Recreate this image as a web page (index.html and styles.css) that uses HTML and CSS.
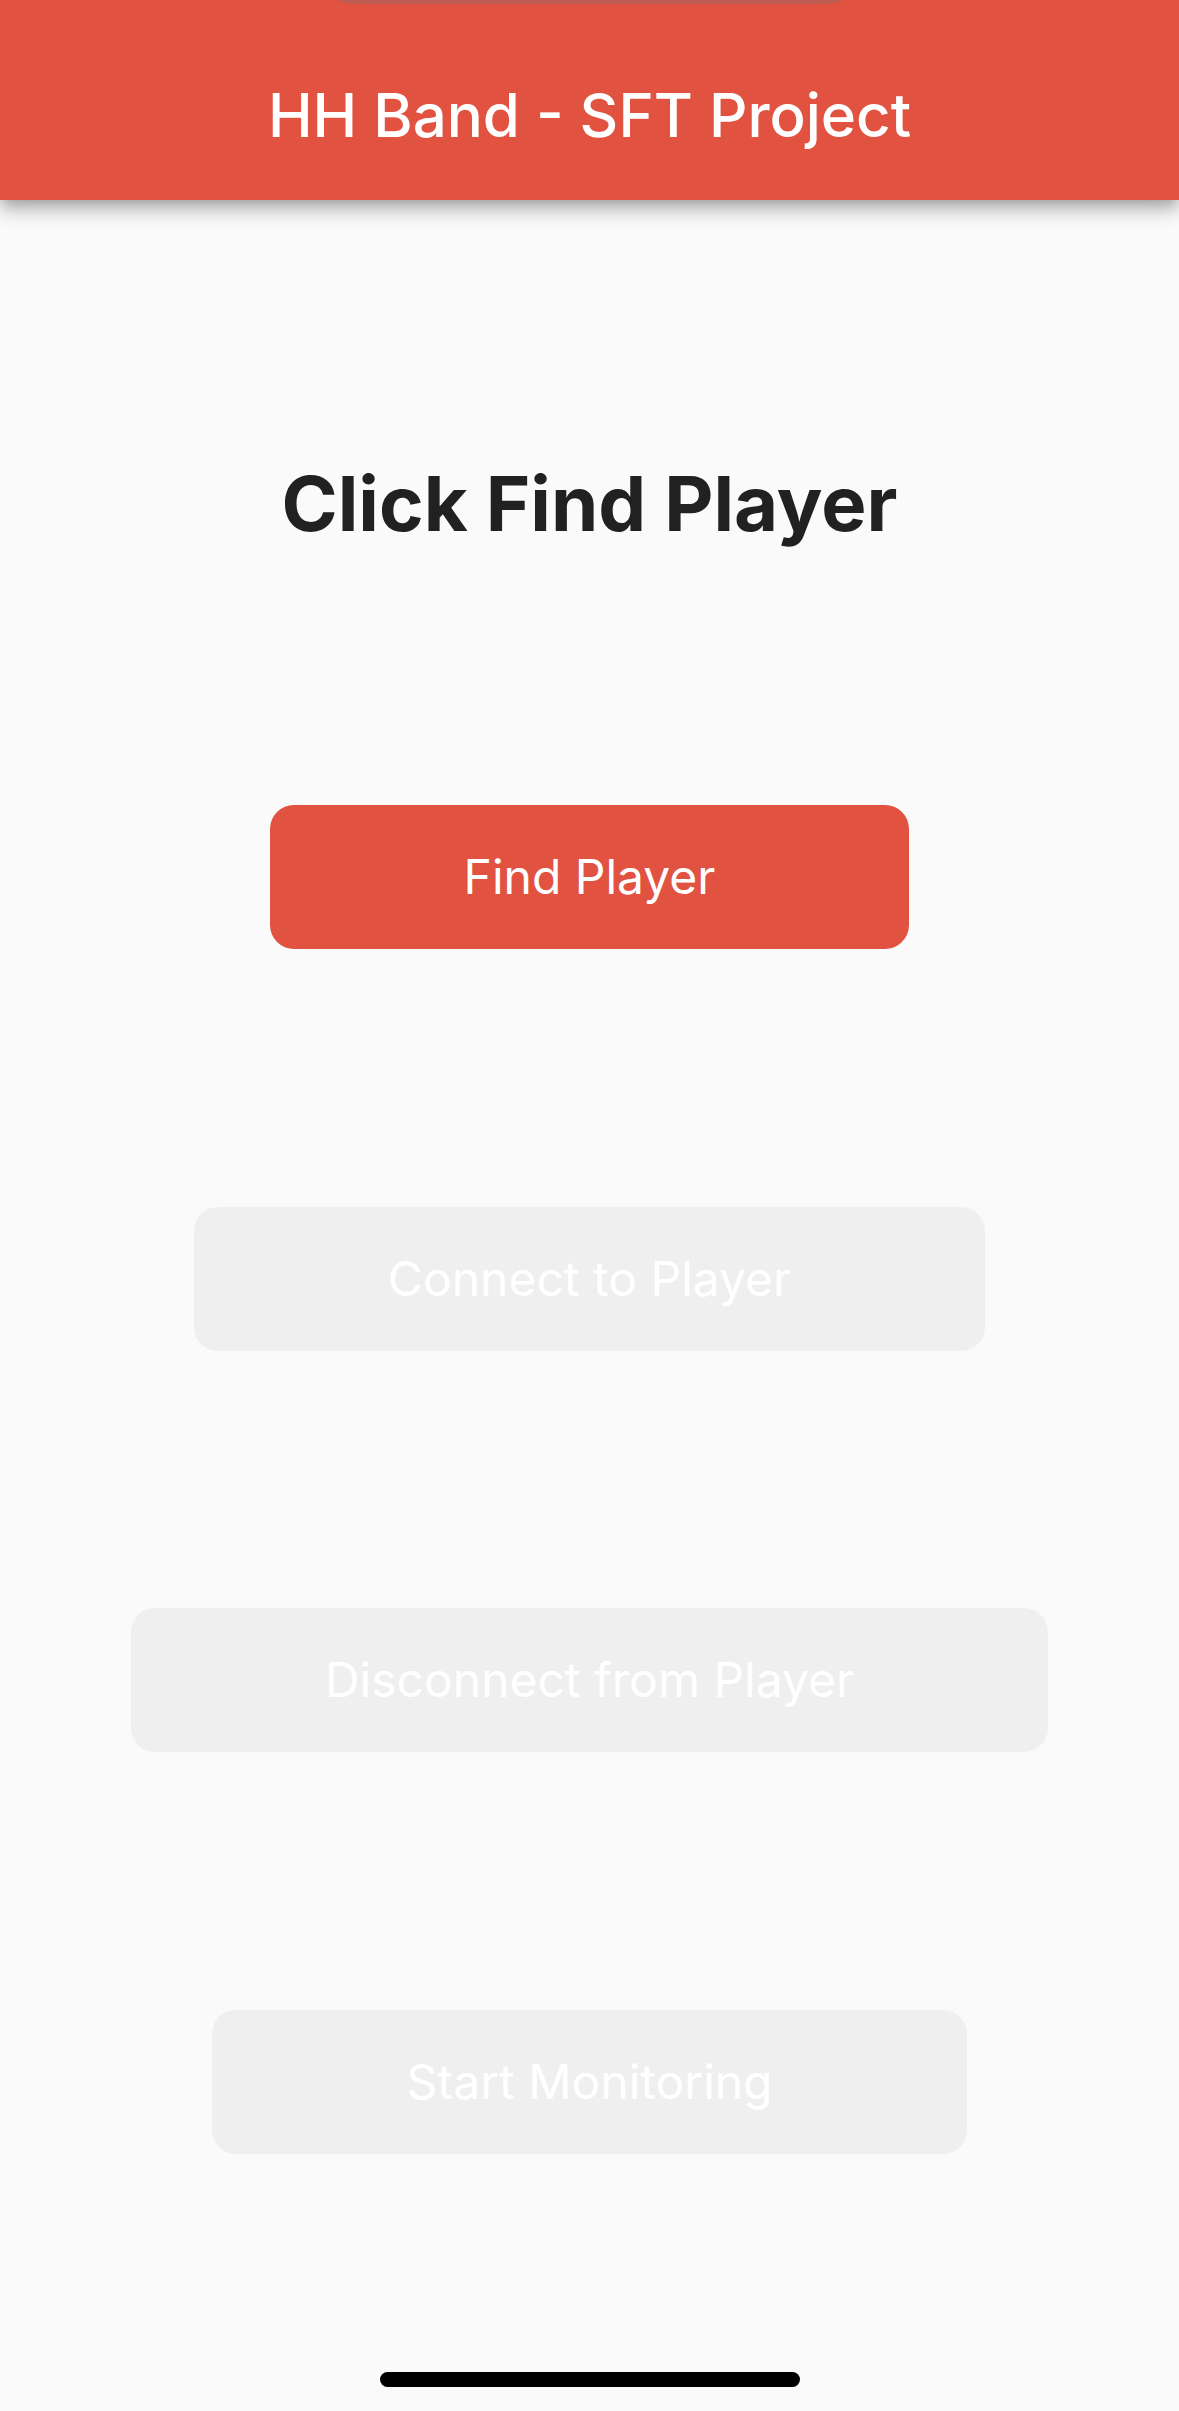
FILE: index.html
```html
<!DOCTYPE html>
<html lang="en">
<head>
<meta charset="utf-8">
<meta name="viewport" content="width=device-width, initial-scale=1">
<title>HH Band - SFT Project</title>
<link rel="stylesheet" href="styles.css">
</head>
<body>
<header class="app-bar">
  <div class="notch"></div>
  <h1 class="app-title">HH Band - SFT Project</h1>
</header>
<main class="content">
  <h2 class="status">Click Find Player</h2>
  <button class="action" type="button">Find Player</button>
  <button class="action" type="button" disabled>Connect to Player</button>
  <button class="action" type="button" disabled>Disconnect from Player</button>
  <button class="action" type="button" disabled>Start Monitoring</button>
</main>
<div class="home-indicator"></div>
</body>
</html>
```
FILE: styles.css
```css
* {
  box-sizing: border-box;
}

body {
  margin: 0;
  min-height: 100vh;
  display: flex;
  flex-direction: column;
  background: #fafafa;
  color: #212121;
  font-family: Inter, "Liberation Sans", sans-serif;
}

.app-bar {
  position: relative;
  padding: 79px 24px 49px;
  background: #e25241;
  color: #fff;
  text-align: center;
  box-shadow:
    0 6px 12px -3px rgba(0, 0, 0, 0.2),
    0 12px 15px 0 rgba(0, 0, 0, 0.14),
    0 3px 30px 0 rgba(0, 0, 0, 0.12);
}

/* Lower edge of the device cutout, over the app bar */
.notch {
  position: absolute;
  top: 0;
  left: 50%;
  width: 504px;
  height: 4px;
  transform: translateX(-50%);
  border-radius: 0 0 24px 24px / 0 0 4px 4px;
  background: #bb5d53;
}

.app-title {
  margin: 0;
  font-size: 60px;
  line-height: 72px;
  font-weight: 500;
}

.content {
  flex: 1;
  display: flex;
  flex-direction: column;
  align-items: center;
  justify-content: space-evenly;
}

.status {
  margin: 0;
  font-size: 76px;
  line-height: 90px;
  font-weight: 700;
}

.action {
  padding: 42px 194px;
  border: 0;
  border-radius: 24px;
  background: #e25241;
  color: #fff;
  font-family: inherit;
  font-size: 48px;
  line-height: 60px;
}

.action:disabled {
  background: #efefef;
}

/* System gesture bar, floating over the page */
.home-indicator {
  position: fixed;
  bottom: 24px;
  left: 50%;
  width: 420px;
  height: 15px;
  transform: translateX(-50%);
  border-radius: 8px;
  background: #000;
}
```
